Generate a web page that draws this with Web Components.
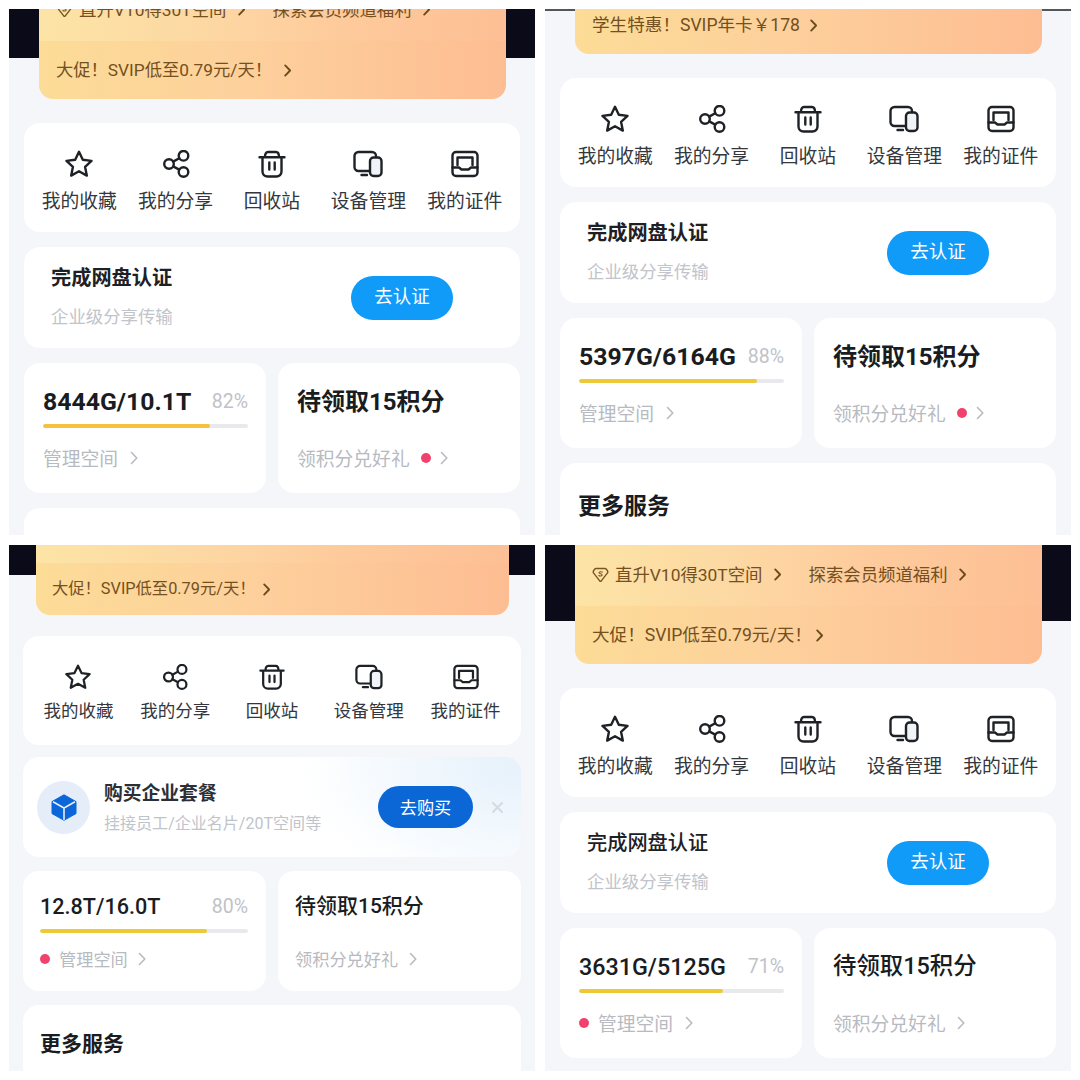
<!DOCTYPE html>
<html lang="zh-CN">
<head>
<meta charset="utf-8">
<title>网盘会员页</title>
<style>
    html, body { margin: 0; background: #fff; }
    body { font-family: Roboto, "Noto Sans CJK SC", sans-serif; }
    #wall {
        display: grid;
        grid-template-columns: 526px 526px;
        grid-auto-rows: 526px;
        gap: 10px;
        padding: 9px;
    }
    /* third shot is a slightly smaller screenshot than the others */
    .compact {
        --side: 14px;
        --promo-l: 27px;
        --promo-r: 26px;
        --promo-size: 16.3px;
        --promo-chev: 7px;
        --promo-pad: 16px;
        --promo-low: 52px;
        --promo-gap: 21px;
        --row-gap: 14px;
        --act-pad: 28px;
        --act-icon: 26px;
        --act-gap: 8px;
        --act-label: 17.5px;
        --stat-h: 120px;
        --stat-l: 17px;
        --stat-top: 19px;
        --bar-gap: 7px;
        --link-gap: 12px;
        --amount-size: 21.6px;
        --title-size: 21px;
        --title-weight: 500;
        --link-size: 17.2px;
        --link-chev: 10px;
        --more-top: 25px;
        --more-size: 21px;
        --more-l: 17px;
        --bar-color: #ecc935;
    }
    .soft {
        --title-weight: 500;
        --strong-weight: 500;
        --bar-color: #ecc935;
        --amount-size: 23.3px;
        --title-size: 23.4px;
    }
</style>
</head>
<body>
<div id="wall">

    <disk-panel style="--promo-h:90px;--dark:49px;--promo-size:17.3px">
        <promo-banner>
            <promo-link slot="top" gem>直升V10得30T空间</promo-link>
            <promo-link slot="top">探索会员频道福利</promo-link>
            <promo-link>大促！SVIP低至0.79元/天！</promo-link>
        </promo-banner>
        <action-strip></action-strip>
        <auth-card></auth-card>
        <stat-row>
            <storage-card fill="81.5" pct="82%">8444G/10.1T</storage-card>
            <points-card dot></points-card>
        </stat-row>
        <more-card></more-card>
    </disk-panel>

    <disk-panel style="--promo-h:45px;--dark:2px;--dark-color:#55565c;--promo-size:17.6px;--promo-chev:9px">
        <promo-banner>
            <promo-link>学生特惠！SVIP年卡￥178</promo-link>
        </promo-banner>
        <action-strip></action-strip>
        <auth-card></auth-card>
        <stat-row>
            <storage-card fill="87" pct="88%" style="--bar-color:#ecc935">5397G/6164G</storage-card>
            <points-card dot></points-card>
        </stat-row>
        <more-card>更多服务</more-card>
    </disk-panel>

    <disk-panel class="compact" style="--promo-h:70px;--dark:30px">
        <promo-banner>
            <promo-link>大促！SVIP低至0.79元/天！</promo-link>
        </promo-banner>
        <action-strip></action-strip>
        <buy-card></buy-card>
        <stat-row>
            <storage-card fill="80.5" pct="80%" dot>12.8T/16.0T</storage-card>
            <points-card></points-card>
        </stat-row>
        <more-card>更多服务</more-card>
    </disk-panel>

    <disk-panel class="soft" style="--promo-h:119px;--dark:76px;--promo-size:17.6px;--promo-chev:3px">
        <promo-banner>
            <promo-link slot="top" gem>直升V10得30T空间</promo-link>
            <promo-link slot="top">探索会员频道福利</promo-link>
            <promo-link>大促！SVIP低至0.79元/天！</promo-link>
        </promo-banner>
        <action-strip></action-strip>
        <auth-card></auth-card>
        <stat-row>
            <storage-card fill="70" pct="71%" dot>3631G/5125G</storage-card>
            <points-card></points-card>
        </stat-row>
    </disk-panel>

</div>

<script>
    const FONT = 'Roboto, "Noto Sans CJK SC", sans-serif';
    const chevron = (w, h, color, sw) => `
        <svg width="${w}" height="${h}" viewBox="0 0 8 14" fill="none" stroke="${color}" stroke-width="${sw}"
             stroke-linecap="round" stroke-linejoin="round"><path d="M1.5 1.5 6.8 7l-5.3 5.5"/></svg>`;

    class ShadowBase extends HTMLElement {
        constructor() {
            super();
            this.attachShadow({ mode: 'open' });
            this.shadowRoot.innerHTML = this.markup();
        }
    }

    class DiskPanel extends ShadowBase {
        markup() {
            return `
            <style>
                :host {
                    display: flex;
                    flex-direction: column;
                    overflow: hidden;
                    gap: var(--row-gap, 15px);
                    background: linear-gradient(var(--dark-color, #0a0a18) var(--dark), #f4f6fa 0);
                }
                ::slotted(*) { flex: none; }
            </style>
            <slot></slot>`;
        }
    }

    class PromoBanner extends ShadowBase {
        markup() {
            return `
            <style>
                :host {
                    display: flex;
                    flex-direction: column;
                    justify-content: flex-end;
                    overflow: hidden;
                    height: var(--promo-h);
                    margin: 0 var(--promo-r, 29px) calc(var(--promo-gap, 24px) - var(--row-gap, 15px)) var(--promo-l, 30px);
                    border-radius: 0 0 14px 14px;
                    background: linear-gradient(90deg, #fcdc97 0%, #fdd09c 45%, #fdbd92 100%);
                }
                .row {
                    flex: none;
                    display: flex;
                    align-items: center;
                    padding-left: var(--promo-pad, 17px);
                    box-sizing: border-box;
                }
                .top {
                    height: 61px;
                    gap: 27px;
                    padding-bottom: 2px;
                    background: linear-gradient(90deg, rgba(255,248,205,.28), rgba(255,255,255,.03) 60%);
                }
                .low { height: var(--promo-low, 58px); }
                ::slotted([slot="top"]) { --promo-size: 17.4px; --promo-chev: 10px; }
            </style>
            <div class="row top"><slot name="top"></slot></div>
            <div class="row low"><slot></slot></div>`;
        }
    }

    class PromoLink extends ShadowBase {
        markup() {
            const gem = this.hasAttribute('gem') ? `
                <svg class="gem" width="17" height="16" viewBox="0 0 17 16" fill="none" stroke="#7a5722" stroke-width="1.4" stroke-linejoin="round" stroke-linecap="round">
                    <path d="M4 1.5h9c1 0 2.8 2 2.8 3.4 0 .6-.2 1-.7 1.500L9.300 13.900c-.5.500-1.100.500-1.600 0L1.900 6.400c-.5-.5-.7-.9-.7-1.500C1.200 3.500 3 1.500 4 1.500z"/>
                    <path d="M10.300 5.200C9.800 4.600 7.200 4.400 7 5.700c-.2 1.300 3.400 1 3.100 2.400-.2 1.100-2.600 1-3.300.4" stroke-width="1.100"/>
                </svg>` : '';
            return `
            <style>
                :host {
                    display: inline-flex;
                    align-items: center;
                    font: 400 var(--promo-size, 17px)/24px ${FONT};
                    color: #74501f;
                    white-space: nowrap;
                }
                .gem { margin-right: 6px; }
                .chev { margin-left: var(--promo-chev, 11px); display: flex; }
            </style>
            ${gem}<slot></slot><span class="chev">${chevron(9, 13, '#6b4a1e', 2)}</span>`;
        }
    }

    const ICONS = {
        star: `<svg viewBox="0 0 28 28"><path d="M14 1.800 17.800 9.800l8.700 1.100-6.400 6 1.700 8.700L14 21.300l-7.800 4.300 1.700-8.700-6.400-6 8.700-1.100z"/></svg>`,
        share: `<svg viewBox="0 0 28 28"><circle cx="7" cy="14" r="4.800"/><circle cx="21.500" cy="5.800" r="4.800"/><circle cx="21.500" cy="22" r="4.800"/><path d="M11.200 11.600l6-3.400M11.200 16.400l6 3.200"/></svg>`,
        trash: `<svg viewBox="0 0 28 28"><path d="M1.500 7.200h25M7 7c0-3 1-5 3-5h8c2 0 3 2 3 5M4.500 7.200V21.500a5 5 0 0 0 5 5h9a5 5 0 0 0 5-5V7.200"/><path d="M11.300 12.500v7M16.700 12.500v7"/></svg>`,
        device: `<svg viewBox="0 0 30 28"><path d="M23 7V6a4 4 0 0 0-4-4H5.500a4 4 0 0 0-4 4v11a4 4 0 0 0 4 4H16"/><rect x="17" y="7.500" width="11.500" height="18.500" rx="3.500" fill="#f0f3f8"/><path d="M8.500 25h5.500"/></svg>`,
        card: `<svg viewBox="0 0 28 28"><rect x="1.500" y="2" width="25" height="24" rx="3.500"/><path d="M6.500 15V7.500h15V15"/><path d="M1.500 17.500H8l2.500 2h7l2.500-2h6.500"/></svg>`,
    };

    class ActionItem extends ShadowBase {
        markup() {
            return `
            <style>
                :host {
                    display: flex;
                    flex-direction: column;
                    align-items: center;
                    gap: var(--act-gap, 11px);
                    font: 400 var(--act-label, 18.800px)/26px ${FONT};
                    color: #34373d;
                    white-space: nowrap;
                }
                .icon { height: var(--act-icon, 28px); display: flex; justify-content: center; }
                svg {
                    height: 100%;
                    fill: none;
                    stroke: #1e2126;
                    stroke-width: 2.400;
                    stroke-linejoin: round;
                    stroke-linecap: round;
                }
            </style>
            <div class="icon">${ICONS[this.getAttribute('icon')]}</div>
            <slot></slot>`;
        }
    }

    class ActionStrip extends ShadowBase {
        markup() {
            const items = [['star', '我的收藏'], ['share', '我的分享'], ['trash', '回收站'], ['device', '设备管理'], ['card', '我的证件']];
            return `
            <style>
                :host {
                    display: grid;
                    grid-template-columns: repeat(5, 1fr);
                    box-sizing: border-box;
                    height: 109px;
                    margin: 0 var(--side, 15px);
                    padding: var(--act-pad, 27px) 7px 0;
                    background: #fff;
                    border-radius: 16px;
                }
            </style>
            ${items.map(([icon, label]) => `<action-item icon="${icon}">${label}</action-item>`).join('')}`;
        }
    }

    class AuthCard extends ShadowBase {
        markup() {
            return `
            <style>
                :host {
                    display: flex;
                    align-items: center;
                    justify-content: space-between;
                    box-sizing: border-box;
                    height: 101px;
                    margin: 0 var(--side, 15px);
                    padding: 0 67px 0 27px;
                    background: #fff;
                    border-radius: 16px;
                    font-family: ${FONT};
                }
                .text { padding-bottom: 1px; }
                .title { font-size: 20.200px; line-height: 28px; font-weight: var(--strong-weight, 700); color: #1d2025; }
                .sub { margin-top: 12px; font-size: 17.400px; line-height: 26px; color: #c1c4ca; }
                button {
                    width: 102px;
                    height: 44px;
                    padding: 0 0 6px;
                    border: 0;
                    border-radius: 22px;
                    background: #0f9bf7;
                    color: #fff;
                    font: 400 18.500px ${FONT};
                }
            </style>
            <div class="text">
                <div class="title">完成网盘认证</div>
                <div class="sub">企业级分享传输</div>
            </div>
            <button>去认证</button>`;
        }
    }

    class BuyCard extends ShadowBase {
        markup() {
            return `
            <style>
                :host {
                    display: flex;
                    align-items: center;
                    box-sizing: border-box;
                    height: 100px;
                    margin: -2px var(--side, 15px) 0;
                    padding-left: 14px;
                    border-radius: 16px;
                    background: radial-gradient(220px 130px at 100% 10%, #e6f1fb 0%, rgba(238,246,253,.7) 55%, rgba(255,255,255,0) 100%), #fff;
                    font-family: ${FONT};
                }
                .disc {
                    width: 53px;
                    height: 53px;
                    flex: none;
                    display: grid;
                    place-items: center;
                    border-radius: 50%;
                    background: #e5edf9;
                }
                .text { margin-left: 14px; padding-top: 2px; }
                .title { font-size: 18.800px; line-height: 26px; font-weight: 600; color: #2c2f35; }
                .sub { margin-top: 5px; font-size: 16.050px; line-height: 24px; color: #c1c4ca; white-space: nowrap; }
                button {
                    flex: none;
                    width: 95px;
                    height: 42px;
                    padding: 0 0 2px;
                    margin-left: auto;
                    border: 0;
                    border-radius: 21px;
                    background: #0b66d6;
                    color: #fff;
                    font: 400 17.200px ${FONT};
                }
                .close { flex: none; width: 48px; display: grid; place-items: center; }
            </style>
            <div class="disc">
                <svg width="26" height="27" viewBox="0 0 26 27">
                    <path d="M13 .8 25 7.600v12L13 26.300 1 19.600v-12z" fill="#0b66d9" stroke="#0b66d9" stroke-linejoin="round"/>
                    <path d="M2 7.800 13 14l11-6.200M13 14v12" fill="none" stroke="#e5edf9" stroke-width="1.600"/>
                </svg>
            </div>
            <div class="text">
                <div class="title">购买企业套餐</div>
                <div class="sub">挂接员工/企业名片/20T空间等</div>
            </div>
            <button>去购买</button>
            <div class="close">
                <svg width="11" height="11" viewBox="0 0 11 11" stroke="#d5dbe3" stroke-width="2" stroke-linecap="round"><path d="M1 1l9 9M10 1l-9 9"/></svg>
            </div>`;
        }
    }

    class StatRow extends ShadowBase {
        markup() {
            return `
            <style>
                :host {
                    display: grid;
                    grid-template-columns: 1fr 1fr;
                    gap: 12px;
                    margin: 0 var(--side, 15px);
                }
            </style>
            <slot></slot>`;
        }
    }

    const STAT_CSS = `
        :host {
            display: block;
            box-sizing: border-box;
            height: var(--stat-h, 130px);
            padding: var(--stat-top, 22px) 18px 0 var(--stat-l, 19px);
            background: #fff;
            border-radius: 16px;
            font-family: ${FONT};
        }
        .head {
            display: flex;
            align-items: center;
            justify-content: space-between;
            box-sizing: border-box;
            height: 32px;
            font-weight: var(--title-weight, 700);
            color: #191c21;
            white-space: nowrap;
        }
        .link {
            display: flex;
            align-items: center;
            height: 28px;
            font-size: var(--link-size, 18.800px);
            color: #b7bac0;
            white-space: nowrap;
        }
        .label { padding-bottom: 2px; }
        .dot { width: 10px; height: 10px; border-radius: 50%; background: #f0426c; flex: none; }
        .chev { display: flex; }
    `;

    class StorageCard extends ShadowBase {
        markup() {
            const dot = this.hasAttribute('dot') ? '<span class="dot"></span>' : '';
            return `
            <style>
                ${STAT_CSS}
                .head { padding-top: 1px; font-size: var(--amount-size, 24.800px); }
                .pct { font-size: 19.500px; font-weight: 400; color: #bfc2c8; }
                .bar { height: 4px; margin-top: var(--bar-gap, 7px); border-radius: 2px; background: #e8e9ec; overflow: hidden; }
                .fill { height: 100%; width: ${this.getAttribute('fill')}%; background: var(--bar-color, #f6c23e); border-radius: 2px; }
                .link { margin-top: var(--link-gap, 16px); }
                .dot { margin-right: 9px; }
                .chev { margin-left: var(--link-chev, 12px); }
            </style>
            <div class="head"><span><slot></slot></span><span class="pct">${this.getAttribute('pct')}</span></div>
            <div class="bar"><div class="fill"></div></div>
            <div class="link">${dot}<span class="label">管理空间</span><span class="chev">${chevron(8, 14, '#b7bac0', 1.6)}</span></div>`;
        }
    }

    class PointsCard extends ShadowBase {
        markup() {
            const hasDot = this.hasAttribute('dot');
            return `
            <style>
                ${STAT_CSS}
                .head { padding-bottom: 4px; font-size: var(--title-size, 24px); }
                .link { margin-top: calc(var(--bar-gap, 7px) + 4px + var(--link-gap, 16px)); }
                .dot { margin-left: 11px; }
                .chev { margin-left: ${hasDot ? 9 : 11}px; }
            </style>
            <div class="head">待领取15积分</div>
            <div class="link"><span class="label">领积分兑好礼</span>${hasDot ? '<span class="dot"></span>' : ''}<span class="chev">${chevron(8, 14, '#b7bac0', 1.6)}</span></div>`;
        }
    }

    class MoreCard extends ShadowBase {
        markup() {
            return `
            <style>
                :host {
                    display: block;
                    height: 100px;
                    margin: 0 var(--side, 15px);
                    padding: var(--more-top, 30px) 0 0 var(--more-l, 18px);
                    background: #fff;
                    border-radius: 16px 16px 0 0;
                    font: 700 var(--more-size, 23px)/28px ${FONT};
                    color: #191c21;
                }
            </style>
            <slot></slot>`;
        }
    }

    customElements.define('disk-panel', DiskPanel);
    customElements.define('promo-banner', PromoBanner);
    customElements.define('promo-link', PromoLink);
    customElements.define('action-item', ActionItem);
    customElements.define('action-strip', ActionStrip);
    customElements.define('auth-card', AuthCard);
    customElements.define('buy-card', BuyCard);
    customElements.define('stat-row', StatRow);
    customElements.define('storage-card', StorageCard);
    customElements.define('points-card', PointsCard);
    customElements.define('more-card', MoreCard);
</script>
</body>
</html>
